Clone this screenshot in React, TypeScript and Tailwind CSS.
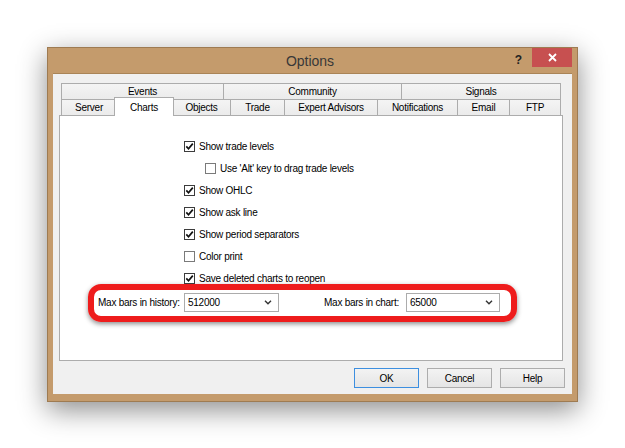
import React from 'react';

const FONT = { fontFamily: '"Liberation Sans", Arial, sans-serif' };

const TOP_TABS = [
  { label: 'Events', w: 'w-[162px]' },
  { label: 'Community', w: 'w-[178px]' },
  { label: 'Signals', w: 'w-[160px]' },
];

const BOTTOM_TABS = [
  { label: 'Server', w: 'w-[55px]' },
  { label: 'Charts', w: 'w-[60px]', active: true },
  { label: 'Objects', w: 'w-[58px]' },
  { label: 'Trade', w: 'w-[54px]' },
  { label: 'Expert Advisors', w: 'w-[93px]' },
  { label: 'Notifications', w: 'w-[80px]' },
  { label: 'Email', w: 'w-[52px]' },
  { label: 'FTP', w: 'w-[52px]' },
];

const OPTIONS = [
  { label: 'Show trade levels', checked: true },
  { label: "Use 'Alt' key to drag trade levels", checked: false, indent: true },
  { label: 'Show OHLC', checked: true },
  { label: 'Show ask line', checked: true },
  { label: 'Show period separators', checked: true },
  { label: 'Color print', checked: false },
  { label: 'Save deleted charts to reopen', checked: true },
];

function Checkbox({ checked }: { checked: boolean }) {
  return (
    <div
      className={`w-[11px] h-[11px] shrink-0 bg-white border flex items-center justify-center ${
        checked ? 'border-[#3c3c3c]' : 'border-[#7a7a7a]'
      }`}
    >
      {checked && (
        <svg width="9" height="9" viewBox="0 0 9 9">
          <path d="M1.3 4.4 L3.5 6.8 L7.8 1.6" fill="none" stroke="#111" strokeWidth="1.7" />
        </svg>
      )}
    </div>
  );
}

function Combo({ value, w }: { value: string; w: string }) {
  return (
    <div className={`${w} h-[19px] shrink-0 bg-white border border-[#acacac] flex items-center pl-[3px] pr-[6px]`}>
      <span className="flex-1">{value}</span>
      <svg width="8" height="5" viewBox="0 0 8 5">
        <path d="M1 0.8 L4 3.8 L7 0.8" fill="none" stroke="#333" strokeWidth="1.4" />
      </svg>
    </div>
  );
}

function Button({ label, primary }: { label: string; primary?: boolean }) {
  return (
    <div
      className={`w-[65px] h-[20px] flex items-center justify-center border bg-gradient-to-b from-[#f3f3f3] to-[#e5e5e5] ${
        primary ? 'border-[#3d8fe0]' : 'border-[#adadad]'
      }`}
    >
      {label}
    </div>
  );
}

export default function App() {
  return (
    <div className="min-h-[448px] bg-white pt-[47px] pl-[47px]" style={FONT}>
      <div className="w-[531px] h-[355px] bg-[#c49b6c] border border-[#9e7b52] shadow-[0_8px_26px_rgba(0,0,0,0.45)] flex flex-col">
        {/* title bar */}
        <div className="h-[25px] flex">
          <div className="flex-1" />
          <div className="pt-[3px] text-[14px] text-[#383838]">Options</div>
          <div className="flex-1 flex justify-end pr-[5px]">
            <div className="pt-[3px] pr-[10px] text-[12px] font-bold text-[#222]">?</div>
            <div className="w-[40px] h-[19px] bg-[#c75050] flex items-center justify-center">
              <svg width="9" height="9" viewBox="0 0 9 9">
                <path d="M1 1 L8 8 M8 1 L1 8" stroke="#fff" strokeWidth="1.8" />
              </svg>
            </div>
          </div>
        </div>

        {/* client area */}
        <div className="ml-[5px] w-[519px] h-[321px] bg-[#f0f0f0] border-t border-[#a98457] text-[10px] tracking-[-0.25px] text-black whitespace-nowrap">
          <div className="ml-[6px] mt-[9px] w-[504px]">
            <div className="px-[2px]">
              <div className="flex h-[16px]">
                {TOP_TABS.map((t, i) => (
                  <div
                    key={t.label}
                    className={`${t.w} h-[16px] flex items-center justify-center bg-gradient-to-b from-[#f4f4f4] to-[#ebebeb] border-t border-l border-[#acacac] ${
                      i === TOP_TABS.length - 1 ? 'border-r' : ''
                    }`}
                  >
                    {t.label}
                  </div>
                ))}
              </div>
              <div className="flex h-[16px] items-start">
                {BOTTOM_TABS.map((t, i) =>
                  t.active ? (
                    <div
                      key={t.label}
                      className={`${t.w} -mx-[2px] -mt-[2px] h-[19px] relative z-10 bg-white border-t border-l border-r border-[#acacac] flex justify-center pt-[2px]`}
                    >
                      {t.label}
                    </div>
                  ) : (
                    <div
                      key={t.label}
                      className={`${t.w} h-[16px] flex items-center justify-center bg-gradient-to-b from-[#f4f4f4] to-[#ebebeb] border-t border-l border-[#acacac] ${
                        i === BOTTOM_TABS.length - 1 ? 'border-r' : ''
                      }`}
                    >
                      {t.label}
                    </div>
                  )
                )}
              </div>
            </div>

            {/* panel */}
            <div className="h-[246px] bg-white border border-[#acacac]">
              <div className="mt-[25px] ml-[124px] flex flex-col gap-[11px]">
                {OPTIONS.map(o => (
                  <div
                    key={o.label}
                    className={`h-[11px] flex items-center gap-[4px] ${o.indent ? 'ml-[21px]' : ''}`}
                  >
                    <Checkbox checked={o.checked} />
                    <span className="leading-none">{o.label}</span>
                  </div>
                ))}
              </div>

              <div className="ml-[28px] w-[429px] h-[38px] border-[6px] border-[#ee1c1c] rounded-[13px] shadow-[0_2px_5px_rgba(0,0,0,0.45)] flex items-center pl-[4px] pb-[2px]">
                <span className="w-[86px]">Max bars in history:</span>
                <Combo value="512000" w="w-[95px]" />
                <span className="ml-[45px] w-[82px]">Max bars in chart:</span>
                <Combo value="65000" w="w-[94px]" />
              </div>
            </div>
          </div>

          {/* buttons */}
          <div className="mt-[7px] pr-[7px] flex justify-end gap-[8px]">
            <Button label="OK" primary />
            <Button label="Cancel" />
            <Button label="Help" />
          </div>
        </div>
      </div>
    </div>
  );
}
